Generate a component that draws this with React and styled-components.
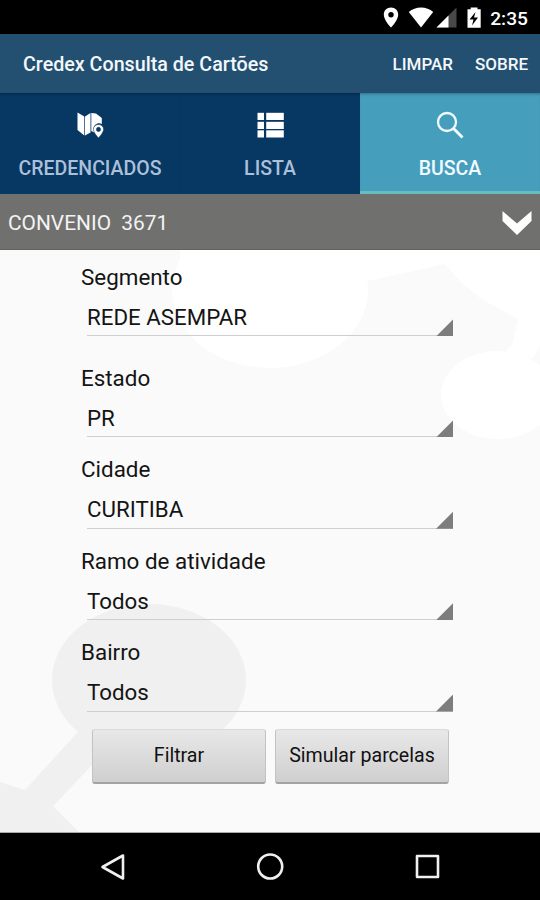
import React, { useState } from 'react';
import styled, { createGlobalStyle } from 'styled-components';

const GlobalStyle = createGlobalStyle`
  * {
    box-sizing: border-box;
  }
  body {
    margin: 0;
    background: #000;
    font-family: Roboto, 'Liberation Sans', sans-serif;
  }
`;

const Screen = styled.div`
  width: 540px;
  height: 900px;
  display: flex;
  flex-direction: column;
  overflow: hidden;
  background: #000;
`;

const StatusBar = styled.div`
  height: 34px;
  display: flex;
  align-items: center;
  justify-content: flex-end;
  padding: 2px 12px 0 0;
  color: #fff;
`;

const StatusIcons = styled.svg`
  width: 100px;
  height: 24px;
  margin-right: 7px;
`;

const Clock = styled.span`
  font-size: 19.2px;
  font-weight: 500;
  line-height: 24px;
  padding-top: 1px;
`;

const Header = styled.header`
  height: 59px;
  display: flex;
  align-items: center;
  padding: 1px 12px 0 23px;
  background: #235070;
  color: #f4f8fc;
`;

const Title = styled.h1`
  flex: 1;
  margin: 0;
  padding-top: 2px;
  font-size: 19.7px;
  font-weight: 500;
  line-height: 28px;
`;

const HeaderAction = styled.button`
  margin-left: 22px;
  padding: 0;
  border: 0;
  background: none;
  color: inherit;
  font: 500 17px/20px Roboto, sans-serif;
`;

const Tabs = styled.nav`
  height: 101px;
  display: grid;
  grid-template-columns: repeat(3, 1fr);
  background: #073763;
`;

const Tab = styled.button`
  display: flex;
  flex-direction: column;
  align-items: center;
  gap: 17px;
  padding: 17px 0 0;
  border: 0;
  border-bottom: 3px solid ${({ $active }) => ($active ? '#65bdbd' : '#073763')};
  background: ${({ $active }) => ($active ? '#469ebd' : '#073763')};
  box-shadow: inset 0 3px 3px -2px rgba(0, 0, 0, 0.3);
  color: ${({ $active }) => ($active ? '#f2fbff' : '#adc0da')};
  font: 500 19.5px/27px Roboto, sans-serif;
  svg {
    width: 30px;
    height: 30px;
    margin-bottom: -2px;
  }
`;

const Banner = styled.div`
  height: 56px;
  display: flex;
  align-items: center;
  justify-content: space-between;
  padding: 3px 8px 0;
  background: #70706f;
  border-bottom: 1px solid #626261;
  color: #f3f3f3;
  font-size: 20.9px;
  white-space: pre;
  svg {
    width: 30px;
    height: 26px;
    margin-top: -1px;
  }
`;

const Content = styled.main`
  position: relative;
  height: 583px;
  padding: 14px 87px 0 81px;
  background: #fafafa;
  border-bottom: 1px solid #aaa;
`;

const Backdrop = styled.svg`
  position: absolute;
  top: 0;
  left: 0;
  width: 540px;
  height: 582px;
`;

const Form = styled.form`
  position: relative;
`;

const Field = styled.div`
  height: 91.4px;
  margin-bottom: ${({ $spaced }) => ($spaced ? '9.6px' : '0')};
`;

const Label = styled.div`
  height: 26px;
  font-size: 22.4px;
  line-height: 26px;
  color: #141414;
`;

const Select = styled.div`
  display: flex;
  align-items: flex-end;
  justify-content: space-between;
  height: 46.4px;
  margin-left: 6px;
  border-bottom: 1px solid #cfcfcf;
  color: #141414;
  font-size: 22.3px;
  line-height: 26px;
  span {
    margin-bottom: 5.4px;
  }
`;

const Caret = styled.i`
  width: 17px;
  height: 17px;
  margin-bottom: -1px;
  background: #7d7d7d;
  clip-path: polygon(100% 0, 100% 100%, 0 100%);
`;

const Buttons = styled.div`
  display: flex;
  gap: 9px;
  margin: -2px 0 0 11px;
`;

const Button = styled.button`
  width: 174px;
  height: 55px;
  padding: 0;
  border: 1px solid #c2c2c2;
  border-top-color: #dadada;
  border-bottom: 2px solid #a3a3a3;
  border-radius: 3px;
  background: linear-gradient(#e8e8e8, #cfcfcf);
  color: #111;
  font: 400 19.6px Roboto, sans-serif;
`;

const NavBar = styled.div`
  flex: 1;
  display: flex;
  justify-content: space-between;
  padding: 17px 96px 0;
  svg {
    width: 34px;
    height: 34px;
    fill: none;
    stroke: #f0f0f0;
    stroke-width: 2.6;
    stroke-linejoin: round;
  }
`;

const MapIcon = () => (
  <svg viewBox="0 0 30 30" fill="#fff">
    <path d="M2.5 2.500 9.300 6.500V25.500l-6.800-5.500z" />
    <path d="M10 6.500 15.500 3v19.500L10 25.500z" />
    <path d="m16.300 3 4.700.5 5.800 4.500V14c-4-2-8.500 1-8 5l1.500 4-4-2z" />
    <path
      fillRule="evenodd"
      d="M23.500 14.500c-3 0-5.100 2.100-5.100 4.800 0 3.500 5.100 8.700 5.100 8.700s5.100-5.200 5.100-8.700c0-2.700-2.100-4.800-5.100-4.800zm0 2.800a2.100 2.100 0 1 1 0 4.200 2.100 2.100 0 0 1 0-4.200z"
      stroke="#073763"
      strokeWidth="0.6"
    />
  </svg>
);

const ListIcon = () => (
  <svg viewBox="0 0 30 30" fill="#fff">
    {[2.8, 11.8, 20.3].map((y) => (
      <g key={y}>
        <path d={`M2.500 ${y}h6.500v7.200H2.500z`} />
        <path d={`M11.200 ${y}h17.600v7.200H11.200z`} />
      </g>
    ))}
  </svg>
);

const SearchIcon = () => (
  <svg viewBox="0 0 30 30" fill="none" stroke="#f2fbff">
    <circle cx="12" cy="12" r="9" strokeWidth="2.300" />
    <path d="m18.300 18.300 9.200 9.200" strokeWidth="2.900" />
  </svg>
);

const tabs = [
  { name: 'CREDENCIADOS', Icon: MapIcon },
  { name: 'LISTA', Icon: ListIcon },
  { name: 'BUSCA', Icon: SearchIcon },
];

const fields = [
  { label: 'Segmento', value: 'REDE ASEMPAR', spaced: true },
  { label: 'Estado', value: 'PR' },
  { label: 'Cidade', value: 'CURITIBA' },
  { label: 'Ramo de atividade', value: 'Todos' },
  { label: 'Bairro', value: 'Todos' },
];

const App = () => {
  const [active, setActive] = useState('BUSCA');

  return (
    <Screen>
      <GlobalStyle />
      <StatusBar>
        <StatusIcons viewBox="0 0 100 24" fill="#fff">
          <path
            fillRule="evenodd"
            d="M8 1.500C3.800 1.500.8 4.600.8 8.700.8 14 8 21.500 8 21.500s7.200-7.500 7.200-12.800c0-4.100-3-7.200-7.200-7.200zM8 6a2.700 2.700 0 1 1 0 5.400A2.700 2.700 0 0 1 8 6z"
          />
          <path d="M38 21.500 25.800 6c6.500-6 18-6 24.400 0z" />
          <path fill="#484848" d="M73.500 1.500v20h-20z" />
          <path d="M65.500 9.500v12h-12z" />
          <path
            fillRule="evenodd"
            d="M84.500 3.200h3.200V1.500h6.800v1.700h3.200v18.600H84.500zM92.500 6l-6 7.500h4l-1.500 6 6-8h-4z"
          />
        </StatusIcons>
        <Clock>2:35</Clock>
      </StatusBar>

      <Header>
        <Title>Credex Consulta de Cartões</Title>
        <HeaderAction>LIMPAR</HeaderAction>
        <HeaderAction>SOBRE</HeaderAction>
      </Header>

      <Tabs>
        {tabs.map(({ name, Icon }) => (
          <Tab key={name} $active={name === active} onClick={() => setActive(name)}>
            <Icon />
            {name}
          </Tab>
        ))}
      </Tabs>

      <Banner>
        {'CONVENIO  3671'}
        <svg viewBox="0 0 30 26" fill="#fff">
          <path d="M.5 1 15 13.500 29.500 1v10L15 25 .5 11z" />
        </svg>
      </Banner>

      <Content>
        <Backdrop viewBox="0 250 540 582">
          {/* pale bubbles behind the form */}
          <g fill="#fff">
            <ellipse cx="270" cy="290" rx="98" ry="78" />
            <path d="M180 250H540V345L533 358 505 352 512 345 518 319 480 298 460 281 445 264 367 281 180 285z" />
            <ellipse cx="498" cy="395" rx="57" ry="44" />
          </g>
          <g fill="#f0f0f0">
            <ellipse cx="149" cy="680" rx="97" ry="76" />
            <path d="M78 732 25 790 0 782V833H80L53 806 91 766 110 745z" />
          </g>
        </Backdrop>
        <Form onSubmit={(e) => e.preventDefault()}>
          {fields.map(({ label, value, spaced }) => (
            <Field key={label} $spaced={spaced}>
              <Label>{label}</Label>
              <Select>
                <span>{value}</span>
                <Caret />
              </Select>
            </Field>
          ))}
          <Buttons>
            <Button>Filtrar</Button>
            <Button>Simular parcelas</Button>
          </Buttons>
        </Form>
      </Content>

      <NavBar>
        <svg viewBox="0 0 34 34">
          <path d="M6.500 17 27 5.500v23z" />
        </svg>
        <svg viewBox="0 0 34 34">
          <circle cx="17.200" cy="16.500" r="12" />
        </svg>
        <svg viewBox="0 0 34 34">
          <rect x="7" y="6" width="21" height="21" />
        </svg>
      </NavBar>
    </Screen>
  );
};

export default App;
